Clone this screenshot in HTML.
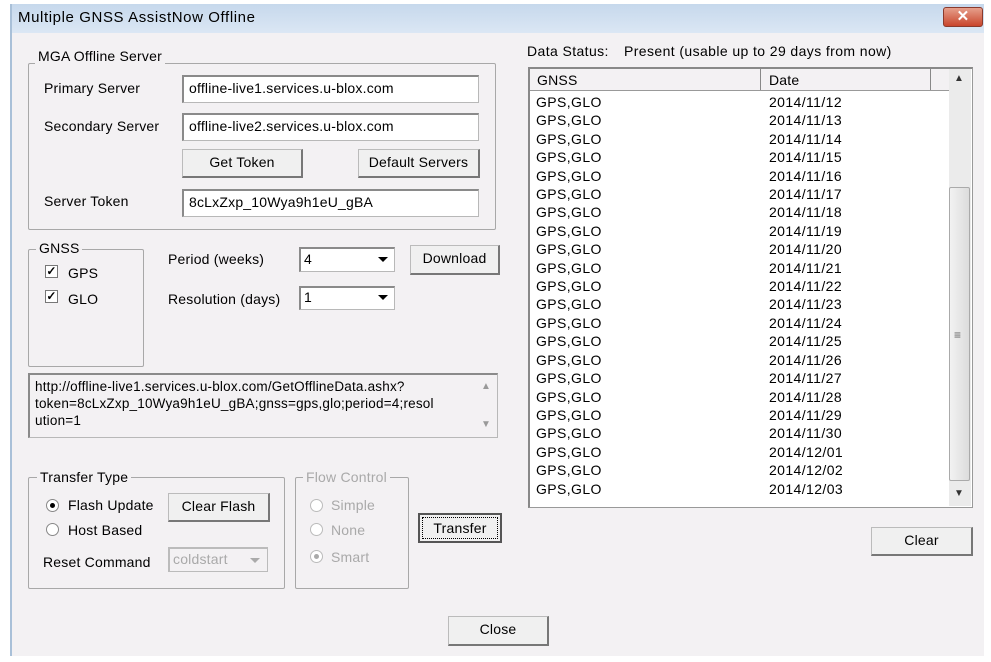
<!DOCTYPE html><html><head><style>
*{box-sizing:border-box;margin:0;padding:0}
body{width:991px;height:662px;background:#fff;font-family:"Liberation Sans",sans-serif;font-size:14px;color:#000;position:relative;overflow:hidden;letter-spacing:0.2px}
.a{position:absolute}
.win{left:10px;top:4px;width:974px;height:652px;background:#f3f1f3;border-left:2px solid #a9c0d8}
.title{left:12px;top:4px;width:972px;height:29px;background:linear-gradient(#c6d8ec,#dbe7f4);}
.grp{border:1px solid #a8a8a8;border-radius:2px}
.lg{background:#f3f1f3;padding:0 3px;line-height:16px}
.inp{background:#fff;border:1px solid #b8b8b8;border-top:2px solid #8a8a8a;border-left:2px solid #8a8a8a;padding-left:5px;line-height:23px}
.btn{background:#f0f0f0;border:1px solid #bbb;border-right:2px solid #777;border-bottom:2px solid #777;text-align:center;line-height:25px}
.cb{width:13px;height:13px;border:1px solid #777;background:#fff;font-size:12px;line-height:11px;text-align:center;font-weight:bold}
.rd{width:13px;height:13px;border-radius:50%;border:1px solid #888;background:#fff}
.dis{color:#a9a9a9}
.arr{width:0;height:0;border-left:5px solid transparent;border-right:5px solid transparent;border-top:5px solid #000}
</style></head><body>
<div class="a win"></div>
<div class="a title"></div>
<div class="a" style="left:18px;top:9px;font-size:15px;letter-spacing:0.6px">Multiple GNSS AssistNow Offline</div>
<div class="a" style="left:943px;top:7px;width:40px;height:20px;background:linear-gradient(#e6a08c,#c9452c);border:1px solid #8a3a2c;border-radius:3px;color:#fff;text-align:center;font-weight:bold;line-height:17px;font-size:15px">✕</div>

<div class="a grp" style="left:28px;top:63px;width:468px;height:167px"></div>
<div class="a lg" style="left:35px;top:48px">MGA Offline Server</div>
<div class="a" style="left:44px;top:80px">Primary Server</div>
<div class="a inp" style="left:182px;top:75px;width:297px;height:28px">offline-live1.services.u-blox.com</div>
<div class="a" style="left:44px;top:118px">Secondary Server</div>
<div class="a inp" style="left:182px;top:113px;width:297px;height:28px">offline-live2.services.u-blox.com</div>
<div class="a btn" style="left:182px;top:149px;width:121px;height:29px">Get Token</div>
<div class="a btn" style="left:358px;top:149px;width:122px;height:29px">Default Servers</div>
<div class="a" style="left:44px;top:193px">Server Token</div>
<div class="a inp" style="left:182px;top:189px;width:297px;height:28px">8cLxZxp_10Wya9h1eU_gBA</div>

<div class="a grp" style="left:28px;top:249px;width:116px;height:118px"></div>
<div class="a lg" style="left:36px;top:240px">GNSS</div>
<div class="a cb" style="left:45px;top:265px">✓</div><div class="a" style="left:68px;top:265px">GPS</div>
<div class="a cb" style="left:45px;top:290px">✓</div><div class="a" style="left:68px;top:291px">GLO</div>
<div class="a" style="left:168px;top:251px">Period (weeks)</div>
<div class="a inp" style="left:299px;top:247px;width:96px;height:25px;line-height:20px;padding-left:3px">4</div>
<div class="a arr" style="left:378px;top:257px"></div>
<div class="a btn" style="left:410px;top:245px;width:90px;height:30px">Download</div>
<div class="a" style="left:168px;top:291px">Resolution (days)</div>
<div class="a inp" style="left:299px;top:286px;width:96px;height:24px;line-height:19px;padding-left:3px">1</div>
<div class="a arr" style="left:378px;top:295px"></div>

<div class="a inp" style="left:28px;top:373px;width:470px;height:65px;background:#f3f1f3;line-height:17px;padding:3px 20px 0 5px;font-size:13.5px">http://offline-live1.services.u-blox.com/GetOfflineData.ashx?<br>token=8cLxZxp_10Wya9h1eU_gBA;gnss=gps,glo;period=4;resol<br>ution=1</div>
<div class="a" style="left:481px;top:381px;color:#999;font-size:10px">▲</div>
<div class="a" style="left:481px;top:419px;color:#999;font-size:10px">▼</div>

<div class="a grp" style="left:28px;top:477px;width:257px;height:112px"></div>
<div class="a lg" style="left:37px;top:469px">Transfer Type</div>
<div class="a rd" style="left:46px;top:499px"><div class="a" style="left:3px;top:3px;width:5px;height:5px;border-radius:50%;background:#000"></div></div>
<div class="a" style="left:68px;top:497px">Flash Update</div>
<div class="a rd" style="left:46px;top:523px"></div>
<div class="a" style="left:68px;top:522px">Host Based</div>
<div class="a btn" style="left:168px;top:493px;width:102px;height:29px">Clear Flash</div>
<div class="a" style="left:43px;top:554px">Reset Command</div>
<div class="a inp dis" style="left:168px;top:547px;width:100px;height:25px;background:#f3f1f3;line-height:20px;padding-left:3px;border-color:#bbb">coldstart</div>
<div class="a arr" style="left:250px;top:558px;border-top-color:#aaa"></div>

<div class="a grp" style="left:295px;top:477px;width:114px;height:112px"></div>
<div class="a lg dis" style="left:303px;top:469px">Flow Control</div>
<div class="a rd" style="left:310px;top:499px;border-color:#bbb"></div><div class="a dis" style="left:331px;top:497px">Simple</div>
<div class="a rd" style="left:310px;top:523px;border-color:#bbb"></div><div class="a dis" style="left:331px;top:522px">None</div>
<div class="a rd" style="left:310px;top:550px;border-color:#bbb"><div class="a" style="left:3px;top:3px;width:5px;height:5px;border-radius:50%;background:#aaa"></div></div><div class="a dis" style="left:331px;top:549px">Smart</div>
<div class="a btn" style="left:418px;top:513px;width:84px;height:30px;border:2px solid #555;"><div style="border:1px dotted #000;margin:2px;line-height:20px">Transfer</div></div>

<div class="a btn" style="left:448px;top:616px;width:101px;height:30px">Close</div>

<div class="a" style="left:527px;top:43px;letter-spacing:0.4px">Data Status:</div>
<div class="a" style="left:624px;top:43px;letter-spacing:0.4px">Present (usable up to 29 days from now)</div>
<div class="a" style="left:528px;top:67px;width:445px;height:441px;background:#fff;border:1px solid #999;border-top:2px solid #888;border-left:2px solid #888"></div>
<div class="a" style="left:530px;top:69px;width:419px;height:22px;background:#f3f1f3;border-bottom:1px solid #999"></div>
<div class="a" style="left:760px;top:69px;width:1px;height:21px;background:#888"></div>
<div class="a" style="left:930px;top:69px;width:1px;height:21px;background:#888"></div>
<div class="a" style="left:537px;top:72px">GNSS</div>
<div class="a" style="left:769px;top:72px">Date</div>
<div class="a" style="left:949px;top:69px;width:22px;height:437px;background:#ebebeb"></div>
<div class="a" style="left:954px;top:73px;font-size:10px;color:#333">▲</div>
<div class="a" style="left:954px;top:488px;font-size:10px;color:#333">▼</div>
<div class="a" style="left:949px;top:187px;width:21px;height:294px;background:linear-gradient(90deg,#f2f2f2,#dcdcdc);border:1px solid #aaa;border-radius:2px"></div>
<div class="a" style="left:954px;top:328px;font-size:12px;color:#666">≡</div>
<div class="a" style="left:536px;top:93px;width:400px;line-height:18.4px;letter-spacing:0.4px">
<div style="display:flex"><span style="width:233px">GPS,GLO</span>2014/11/12</div>
<div style="display:flex"><span style="width:233px">GPS,GLO</span>2014/11/13</div>
<div style="display:flex"><span style="width:233px">GPS,GLO</span>2014/11/14</div>
<div style="display:flex"><span style="width:233px">GPS,GLO</span>2014/11/15</div>
<div style="display:flex"><span style="width:233px">GPS,GLO</span>2014/11/16</div>
<div style="display:flex"><span style="width:233px">GPS,GLO</span>2014/11/17</div>
<div style="display:flex"><span style="width:233px">GPS,GLO</span>2014/11/18</div>
<div style="display:flex"><span style="width:233px">GPS,GLO</span>2014/11/19</div>
<div style="display:flex"><span style="width:233px">GPS,GLO</span>2014/11/20</div>
<div style="display:flex"><span style="width:233px">GPS,GLO</span>2014/11/21</div>
<div style="display:flex"><span style="width:233px">GPS,GLO</span>2014/11/22</div>
<div style="display:flex"><span style="width:233px">GPS,GLO</span>2014/11/23</div>
<div style="display:flex"><span style="width:233px">GPS,GLO</span>2014/11/24</div>
<div style="display:flex"><span style="width:233px">GPS,GLO</span>2014/11/25</div>
<div style="display:flex"><span style="width:233px">GPS,GLO</span>2014/11/26</div>
<div style="display:flex"><span style="width:233px">GPS,GLO</span>2014/11/27</div>
<div style="display:flex"><span style="width:233px">GPS,GLO</span>2014/11/28</div>
<div style="display:flex"><span style="width:233px">GPS,GLO</span>2014/11/29</div>
<div style="display:flex"><span style="width:233px">GPS,GLO</span>2014/11/30</div>
<div style="display:flex"><span style="width:233px">GPS,GLO</span>2014/12/01</div>
<div style="display:flex"><span style="width:233px">GPS,GLO</span>2014/12/02</div>
<div style="display:flex"><span style="width:233px">GPS,GLO</span>2014/12/03</div>
</div>
<div class="a btn" style="left:871px;top:527px;width:102px;height:29px">Clear</div>
</body></html>
